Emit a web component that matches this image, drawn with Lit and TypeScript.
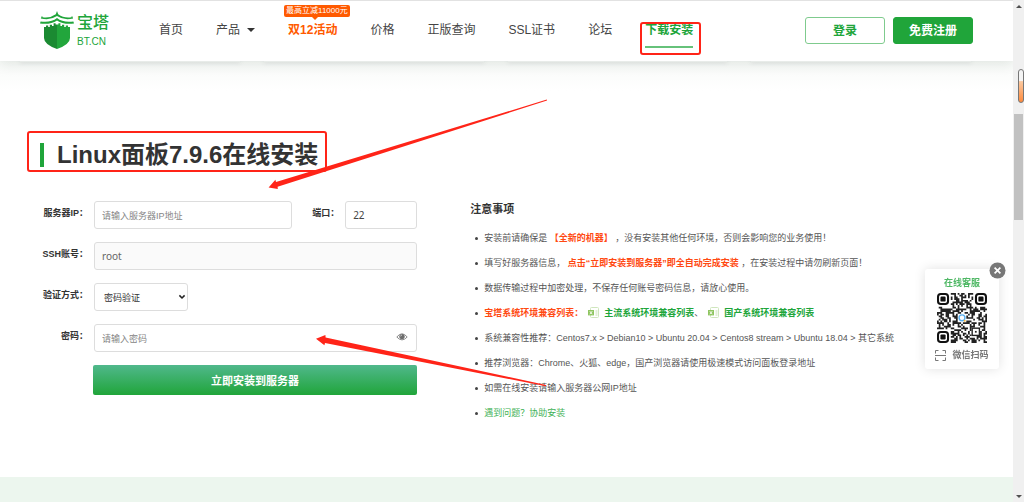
import { LitElement, html, css, svg, nothing } from "lit";
import { customElement, property, state } from "lit/decorators.js";

interface NavItem {
  label: string;
  caret?: boolean;
  badge?: string;
  active?: boolean;
}

const NAV: NavItem[] = [
  { label: "首页" },
  { label: "产品", caret: true },
  { label: "双12活动", badge: "最高立减11000元" },
  { label: "价格" },
  { label: "正版查询" },
  { label: "SSL证书" },
  { label: "论坛" },
  { label: "下载安装", active: true },
];

@customElement("site-header")
class SiteHeader extends LitElement {
  static styles = css`
    :host {
      display: block;
      position: relative;
      z-index: 1;
    }
    .bar {
      display: flex;
      align-items: center;
      height: 58px;
      padding: 0 40px 2px;
      border-top: 1px solid #e2e2e2;
      background: #fff;
      box-shadow: 0 3px 12px rgba(40, 60, 50, 0.11);
    }
    .logo {
      display: flex;
      align-items: center;
      gap: 3px;
      color: #20a53a;
      text-decoration: none;
    }
    .logo svg {
      width: 34px;
      height: 38px;
    }
    .name {
      display: grid;
      gap: 3px;
    }
    .cn {
      font-size: 16px;
      line-height: 20px;
      font-weight: 500;
    }
    .en {
      font-size: 10px;
      line-height: 12px;
    }
    nav {
      display: flex;
      gap: 33px;
      margin-left: 50px;
    }
    .link {
      position: relative;
      display: flex;
      align-items: center;
      gap: 7px;
      color: #444;
      font-size: 12px;
      line-height: 34px;
      white-space: nowrap;
      text-decoration: none;
    }
    .caret {
      border: 4px solid transparent;
      border-top-color: #333;
      border-bottom: 0;
    }
    .promo {
      color: #ff5a00;
      font-weight: 700;
    }
    .badge {
      position: absolute;
      left: -4px;
      top: -8px;
      padding: 0 2px;
      border-radius: 2px;
      background: #ff5a00;
      color: #fff;
      font-size: 8px;
      line-height: 12px;
      font-weight: 400;
    }
    .badge::after {
      content: "";
      position: absolute;
      left: 28px;
      top: 12px;
      border: 3px solid transparent;
      border-top-color: #ff5a00;
      border-bottom: 0;
    }
    .active {
      color: #20a53a;
      font-weight: 700;
    }
    .active::before {
      content: "";
      position: absolute;
      left: 0;
      right: 0;
      bottom: -1px;
      height: 2px;
      background: #66c27a;
    }
    .active::after {
      content: "";
      position: absolute;
      inset: 9px -8px -8px -5px;
      border: 2px solid #ff2418;
      border-radius: 3px;
    }
    .actions {
      display: flex;
      gap: 8px;
      margin-left: auto;
    }
    button {
      box-sizing: border-box;
      width: 80px;
      height: 27px;
      padding: 0 0 2px;
      border: 1px solid #20a53a;
      border-radius: 3px;
      font: inherit;
      font-size: 12px;
      font-weight: 700;
    }
    .login {
      background: #fff;
      color: #20a53a;
      border-color: #7fcb8e;
    }
    .register {
      background: #20a53a;
      color: #fff;
    }
  `;

  render() {
    return html`
      <header class="bar">
        <a class="logo" href="#">
          <svg viewBox="0 0 34 38" aria-hidden="true">
            <path d="M17 0 L18.2 3.2 Q24 7.4 31.4 6.2 L32 4.8 L33.2 7.4 Q24 9.8 17 5 Q10 9.8 .8 7.4 L2 4.8 L2.6 6.2 Q10 7.4 15.8 3.2Z" fill="#20a53a"/>
            <path d="M17 7 Q23 11.8 33.4 10.4 L34 12.6 Q23 13.8 17 9.4 Q11 13.8 0 12.6 L.6 10.4 Q11 11.8 17 7Z" fill="#20a53a"/>
            <path d="M4 16h2v-1.6h2.2V16h1.6v-2.2H12V15h1.6v-2.8h2V13.6h1.4V38Q4 33.4 4 27Z" fill="#1b8a32"/>
            <path d="M30 16h-2v-1.6h-2.2V16h-1.6v-2.2H22V15h-1.6v-2.8h-2V13.6H17V38Q30 33.4 30 27Z" fill="#22a63c"/>
          </svg>
          <span class="name"><span class="cn">宝塔</span><span class="en">BT.CN</span></span>
        </a>
        <nav>
          ${NAV.map(
            (n) => html`<a
              href="#"
              class="link ${n.badge ? "promo" : ""} ${n.active ? "active" : ""}"
              >${n.label}${n.caret ? html`<i class="caret"></i>` : nothing}${n.badge
                ? html`<span class="badge">${n.badge}</span>`
                : nothing}</a
            >`
          )}
        </nav>
        <div class="actions">
          <button class="login" type="button">登录</button>
          <button class="register" type="button">免费注册</button>
        </div>
      </header>
    `;
  }
}

@customElement("install-form")
class InstallForm extends LitElement {
  @state() private reveal = false;

  static styles = css`
    :host {
      display: block;
    }
    form {
      display: grid;
      gap: 13px;
    }
    .row {
      display: grid;
      grid-template-columns: 48px minmax(0, 1fr);
      column-gap: 6px;
      align-items: start;
    }
    .split {
      grid-template-columns: 48px minmax(0, 1fr) auto 72px;
    }
    label {
      color: #333;
      font-size: 9px;
      line-height: 24px;
      font-weight: 700;
      text-align: right;
      white-space: nowrap;
    }
    .port {
      margin-left: 14px;
    }
    .field {
      position: relative;
    }
    input,
    select {
      box-sizing: border-box;
      display: block;
      width: 100%;
      height: 28px;
      padding: 0 7px;
      border: 1px solid #ddd;
      border-radius: 3px;
      background: #fff;
      color: #444;
      font-family: "Noto Sans", "Noto Sans CJK SC", sans-serif;
      font-size: 10px;
      outline: none;
    }
    input::placeholder {
      color: #858585;
      font-family: "Liberation Sans", "Noto Sans CJK SC", sans-serif;
      font-size: 9px;
      opacity: 1;
    }
    input[readonly] {
      background: #fafafa;
      color: #666;
    }
    .short {
      width: 94px;
    }
    select {
      appearance: none;
      padding: 0 9px;
      color: #333;
      font-size: 9px;
    }
    .chevron {
      position: absolute;
      right: 2px;
      top: 11px;
      width: 8px;
      height: 6px;
      pointer-events: none;
    }
    .eye {
      position: absolute;
      right: 9px;
      top: 8px;
      width: 12px;
      height: 10px;
      padding: 0;
      border: 0;
      background: none;
    }
    .eye svg {
      display: block;
    }
    .submit {
      height: 30px;
      margin-left: 53px;
      border: 0;
      border-radius: 2px;
      background: linear-gradient(#50b88c, #20a53a);
      color: #fff;
      font: inherit;
      font-size: 11px;
      font-weight: 700;
    }
  `;

  render() {
    return html`
      <form @submit=${(e: Event) => e.preventDefault()}>
        <div class="row split">
          <label for="ip">服务器IP：</label>
          <input id="ip" type="text" placeholder="请输入服务器IP地址" />
          <label class="port" for="port">端口：</label>
          <input id="port" type="text" value="22" />
        </div>
        <div class="row">
          <label for="user">SSH账号：</label>
          <input id="user" type="text" value="root" readonly />
        </div>
        <div class="row">
          <label for="mode">验证方式：</label>
          <div class="field short">
            <select id="mode">
              <option>密码验证</option>
              <option>密钥验证</option>
            </select>
            <svg class="chevron" viewBox="0 0 8 6" aria-hidden="true">
              <path d="M1.4 1.4 4 4 6.6 1.4" fill="none" stroke="#222" stroke-width="1.5"/>
            </svg>
          </div>
        </div>
        <div class="row">
          <label for="pwd">密码：</label>
          <div class="field">
            <input id="pwd" type=${this.reveal ? "text" : "password"} placeholder="请输入密码" />
            <button class="eye" type="button" aria-label="显示密码" @click=${() => (this.reveal = !this.reveal)}>
              <svg width="12" height="10" viewBox="0 0 12 10" aria-hidden="true">
                <path d="M.8 5Q6-1.4 11.2 5 6 10.8 .8 5Z" fill="#fff" stroke="#8a8a8a" stroke-width="1"/>
                <circle cx="6" cy="4.6" r="2.7" fill="#6c6c6c"/>
                <path d="M4.6 4.4A1.5 1.5 0 0 1 6 3" fill="none" stroke="#fff" stroke-width=".6"/>
              </svg>
            </button>
          </div>
        </div>
        <button class="submit" type="submit">立即安装到服务器</button>
      </form>
    `;
  }
}

@customElement("install-notes")
class InstallNotes extends LitElement {
  static styles = css`
    :host {
      display: block;
      color: #555;
      font-size: 9px;
    }
    h2 {
      margin: 0 0 9px;
      color: #333;
      font-size: 11px;
      line-height: 16px;
      font-weight: 700;
    }
    ul {
      margin: 0;
      padding: 0;
      list-style: none;
    }
    li {
      position: relative;
      padding-left: 14px;
      line-height: 25px;
      white-space: nowrap;
    }
    li::before {
      content: "";
      position: absolute;
      left: 5px;
      top: 11px;
      width: 3px;
      height: 3px;
      border-radius: 50%;
      background: #444;
    }
    strong {
      color: #ff4a12;
    }
    a {
      color: #20a53a;
      text-decoration: none;
    }
    .sheet {
      font-weight: 700;
    }
    .sheet svg {
      width: 11px;
      height: 11px;
      margin: 0 5px;
      vertical-align: -2px;
    }
    .help {
      color: #3fb256;
    }
  `;

  private sheet(label: string) {
    return html`<a class="sheet" href="#"
      ><svg viewBox="0 0 11 11" aria-hidden="true">
        <rect x="2.5" y=".5" width="8" height="10" rx="1" fill="#fff" stroke="#cfe6bd"/>
        <path d="M7.5 4h2M7.5 6h2M7.5 8h2" stroke="#b5d99a" stroke-width=".8"/>
        <rect x="0" y="3" width="6" height="5.4" fill="#8fc561"/>
        <path d="M1.8 4.2 4.2 7.2M4.2 4.2 1.8 7.2" stroke="#fff" stroke-width=".9"/></svg
      >${label}</a
    >`;
  }

  render() {
    return html`
      <h2>注意事项</h2>
      <ul>
        <li>安装前请确保是 <strong>【全新的机器】</strong> ，没有安装其他任何环境，否则会影响您的业务使用！</li>
        <li>填写好服务器信息， <strong>点击“立即安装到服务器”即全自动完成安装</strong> ，在安装过程中请勿刷新页面！</li>
        <li>数据传输过程中加密处理，不保存任何账号密码信息，请放心使用。</li>
        <li><strong>宝塔系统环境兼容列表：</strong>${this.sheet("主流系统环境兼容列表")}、${this.sheet("国产系统环境兼容列表")}</li>
        <li>系统兼容性推荐：Centos7.x &gt; Debian10 &gt; Ubuntu 20.04 &gt; Centos8 stream &gt; Ubuntu 18.04 &gt; 其它系统</li>
        <li>推荐浏览器：Chrome、火狐、edge，国产浏览器请使用极速模式访问面板登录地址</li>
        <li>如需在线安装请输入服务器公网IP地址</li>
        <li><a class="help" href="#">遇到问题？协助安装</a></li>
      </ul>
    `;
  }
}

const QR_SIZE = 29;

/** Dark data modules of the code, leaving the finder corners and the centre badge free. */
function qrPath(): string {
  let seed = 20231;
  let d = "";
  for (let y = 0; y < QR_SIZE; y++) {
    for (let x = 0; x < QR_SIZE; x++) {
      seed = (seed * 1103515245 + 12345) % 2147483648;
      const finder = (x < 8 && y < 8) || (x > 20 && y < 8) || (x < 8 && y > 20);
      const centre = Math.abs(x - 14) < 3 && Math.abs(y - 14) < 3;
      const align = x > 19 && x < 25 && y > 19 && y < 25;
      if (!finder && !centre && !align && seed / 2147483648 < 0.5) d += `M${x} ${y}h1v1h-1z`;
    }
  }
  return d;
}

@customElement("support-card")
class SupportCard extends LitElement {
  @property({ type: Boolean, reflect: true }) closed = false;

  static styles = css`
    :host {
      display: block;
      position: fixed;
      z-index: 3;
      right: 25px;
      top: 269px;
    }
    :host([closed]) {
      display: none;
    }
    .card {
      box-sizing: border-box;
      display: grid;
      justify-items: center;
      width: 74px;
      padding: 6px 4px;
      border-radius: 3px;
      background: #fff;
      box-shadow: 0 0 12px rgba(0, 0, 0, 0.12);
      font-size: 9px;
      line-height: 16px;
      font-weight: 700;
      color: #777;
    }
    .title {
      color: #4fb865;
    }
    .code {
      width: 50px;
      height: 50px;
      margin: 2px 0 4px;
    }
    .scan {
      display: flex;
      align-items: center;
      gap: 6px;
    }
    .close {
      position: absolute;
      right: -7px;
      top: -7px;
      width: 17px;
      height: 17px;
      padding: 0;
      border: 0;
      background: none;
    }
    svg {
      display: block;
    }
  `;

  render() {
    const finder = (x: number, y: number) => svg`
      <rect x=${x + 0.6} y=${y + 0.6} width="5.8" height="5.8" rx="1.6" fill="none" stroke="#111" stroke-width="1.2"/>
      <rect x=${x + 2} y=${y + 2} width="3" height="3" rx=".7" fill="#111"/>`;
    return html`
      <aside class="card">
        <span class="title">在线客服</span>
        <svg class="code" viewBox="0 0 29 29" role="img" aria-label="二维码">
          <path d=${qrPath()} fill="#222"/>
          ${finder(0, 0)}${finder(22, 0)}${finder(0, 22)}
          <rect x="20.4" y="20.4" width="4.2" height="4.2" fill="none" stroke="#222" stroke-width=".8"/>
          <rect x="22" y="22" width="1" height="1" fill="#222"/>
          <circle cx="14.5" cy="14.4" r="1.7" fill="none" stroke="#55aef0" stroke-width=".8"/>
          <path d="M15.6 15.8l.9.6" stroke="#f5b53c" stroke-width=".9"/>
        </svg>
        <span class="scan">
          <svg width="11" height="11" viewBox="0 0 11 11" fill="none" stroke="#777" aria-hidden="true">
            <path d="M.5 3.5v-3h3M7.5.5h3v3M10.5 7.5v3h-3M3.5 10.5h-3v-3M0 5.5h11"/>
          </svg>
          微信扫码
        </span>
      </aside>
      <button class="close" type="button" aria-label="关闭" @click=${() => (this.closed = true)}>
        <svg width="17" height="17" viewBox="0 0 17 17" aria-hidden="true">
          <circle cx="8.5" cy="8.5" r="8" fill="#777"/>
          <path d="M5.6 5.6l5.8 5.8M11.4 5.6l-5.8 5.8" stroke="#fff" stroke-width="1.7"/>
        </svg>
      </button>
    `;
  }
}

@customElement("scroll-rail")
class ScrollRail extends LitElement {
  static styles = css`
    :host {
      position: relative;
      z-index: 2;
      display: flex;
      flex-direction: column;
      align-items: center;
      padding: 5px 0 4px;
      background: #f0f0f0;
    }
    .up,
    .down {
      border: 3px solid transparent;
    }
    .up {
      border-bottom-color: #505050;
      border-top: 0;
    }
    .down {
      border-top-color: #505050;
      border-bottom: 0;
    }
    .track {
      flex: 1;
      display: grid;
      grid-template-rows: 22fr 22fr 57fr;
      width: 9px;
    }
    .thumb {
      grid-row: 2;
      background: #c1c1c1;
    }
    .pill {
      position: absolute;
      right: 0;
      top: 69px;
      box-sizing: border-box;
      width: 6px;
      height: 34px;
      border: 1px solid #777;
      border-radius: 3px;
      background: linear-gradient(#f4f4f4 35%, #fbc9a0 36%, #ff8a3c);
    }
  `;

  render() {
    return html`<i class="up"></i>
      <div class="track"><div class="thumb"></div></div>
      <i class="down"></i>
      <i class="pill"></i>`;
  }
}

@customElement("app-root")
class AppRoot extends LitElement {
  static styles = css`
    :host {
      display: grid;
      grid-template-columns: minmax(0, 1fr) 11px;
      min-height: 100vh;
      position: relative;
      overflow: hidden;
      background: #fff;
      font-family: "Liberation Sans", "Noto Sans CJK SC", sans-serif;
    }
    .page {
      display: flex;
      flex-direction: column;
    }
    .cards {
      display: grid;
      grid-template-columns: repeat(4, 1fr);
      gap: 24px;
      padding: 0 42px 0 20px;
      height: 30px;
      background: linear-gradient(#f8faf8, #fff);
    }
    .edge {
      height: 1px;
      box-shadow: 0 0 4px rgba(60, 70, 80, 0.35);
    }
    main {
      padding: 49px 40px 51px;
    }
    h1 {
      position: relative;
      display: flex;
      align-items: center;
      gap: 13px;
      width: max-content;
      margin: 0 0 31px;
      color: #333;
      font-size: 24px;
      line-height: 30px;
      font-weight: 700;
    }
    h1::before {
      content: "";
      width: 4px;
      height: 24px;
      background: #20a53a;
    }
    h1::after {
      content: "";
      position: absolute;
      inset: -9px -9px -2px -13px;
      border: 2px solid #ff2418;
      border-radius: 3px;
    }
    .columns {
      display: grid;
      grid-template-columns: 3fr 4fr;
      column-gap: 53px;
    }
    .band {
      flex: 1;
      min-height: 24px;
      background: #ecf6ee;
    }
    .marks {
      position: absolute;
      z-index: 2;
      left: 0;
      top: 0;
      pointer-events: none;
    }
  `;

  render() {
    return html`
      <div class="page">
        <site-header></site-header>
        <div class="cards">${[0, 1, 2, 3].map(() => html`<div class="edge"></div>`)}</div>
        <main>
          <h1>Linux面板7.9.6在线安装</h1>
          <div class="columns">
            <install-form></install-form>
            <install-notes></install-notes>
          </div>
        </main>
        <div class="band"></div>
      </div>
      <scroll-rail></scroll-rail>
      <svg class="marks" width="560" height="400" viewBox="0 0 560 400" fill="#ff2418" aria-hidden="true">
        <path d="M546.8 99.6 L547 100.6 L277.6 186.8 L277.8 189 L268.6 187.6 L275.4 179.8 L276 182Z"/>
        <path d="M546 385 L546 386.2 L325 343 L324.4 345.2 L316 338.8 L325.4 335 L325.6 337.4Z"/>
      </svg>
      <support-card></support-card>
    `;
  }
}
